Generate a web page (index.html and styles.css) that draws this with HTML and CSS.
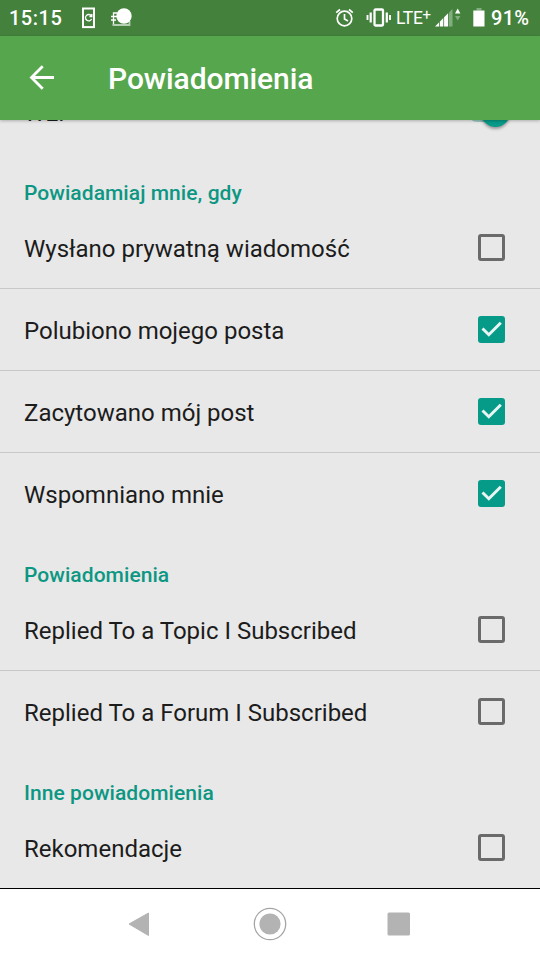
FILE: index.html
```html
<!DOCTYPE html>
<html lang="pl">
<head>
<meta charset="utf-8">
<title>Powiadomienia</title>
<link rel="stylesheet" href="styles.css">
</head>
<body>
<div class="screen">
  <header class="status">
    <span class="clock">15:15</span>
    <svg class="sim" width="14" height="22" viewBox="0 0 14 22" fill="none" stroke="#fff"><rect x="1" y="1.500" width="11" height="18.600" stroke-width="2"/><path d="M9.400 9A3.200 3.200 0 1 0 9.600 12M9.800 7v2.600H7.400" stroke-width="1.300"/></svg>
    <svg class="notice" width="24" height="20" viewBox="0 0 24 20" fill="none" stroke="#fff"><path d="M7 5H3.500v12M1 8.500h6M1 12h5" stroke-width="1.300"/><path d="M2.500 17h17v-4" stroke="#b4cfb2" stroke-width="1.800"/><circle cx="14" cy="8" r="7.700" fill="#fff" stroke="none"/></svg>
    <span class="spacer"></span>
    <svg class="alarm" width="20" height="20" viewBox="0 0 20 20" fill="none" stroke="#fff" stroke-width="1.700"><circle cx="9.500" cy="10.500" r="7.300"/><path d="M9.500 6v5l3.500 2M1.200 4.700 5 1.500M17.800 4.700 14 1.500"/></svg>
    <svg class="vibrate" width="26" height="20" viewBox="0 0 26 20" fill="none" stroke="#fff"><rect x="8.500" y="1.500" width="8.500" height="16" rx="1" stroke-width="2.300"/><path d="M4.700 4.500v10M20.800 4.500v10" stroke-width="2.200"/><path d="M1.500 7v5M24 7v5" stroke-width="1.900"/></svg>
    <span class="lte">LTE<sup>+</sup></span>
    <svg class="signal" width="27" height="20" viewBox="0 0 27 20"><path d="M14 4.500 17.500 1v17.500H14z" fill="#82ad7f"/><path d="M0 18.500 4 14.500v4zM4.800 13.700 8.300 10v8.500H4.800zM9.100 9.200l4-4v13.300h-4z" fill="#fff"/><path d="m20 5.500 2.700-5 2.700 5z" fill="#fff"/><path d="m20 8 2.700 4.500L25.400 8z" fill="#82ad7f"/></svg>
    <svg class="battery" width="12" height="20" viewBox="0 0 12 20"><path d="M3.500 0h5v2.500h-5z" fill="#82ad7f"/><path d="M.3 2.500h11.200v16H.3z" fill="#fff"/></svg>
    <span class="percent">91%</span>
  </header>
  <header class="appbar">
    <svg class="back" width="26" height="26" viewBox="0 0 26 26" fill="none" stroke="#fff" stroke-width="2.800"><path d="M25 12.500H3M13.700 1.300 2.500 12.500l11.200 11.200"/></svg>
    <h1>Powiadomienia</h1>
  </header>
  <main class="list">
    <div class="row last"><span>WŁ.</span><i class="switch"></i></div>
    <h2>Powiadamiaj mnie, gdy</h2>
    <div class="row"><span>Wysłano prywatną wiadomość</span><i class="box"></i></div>
    <div class="row"><span>Polubiono mojego posta</span><i class="box checked"><svg width="27" height="27" viewBox="0 0 27 27"><path d="m4.500 12.500 6.300 6.200L22.800 6.700"/></svg></i></div>
    <div class="row"><span>Zacytowano mój post</span><i class="box checked"><svg width="27" height="27" viewBox="0 0 27 27"><path d="m4.500 12.500 6.300 6.200L22.800 6.700"/></svg></i></div>
    <div class="row last"><span>Wspomniano mnie</span><i class="box checked"><svg width="27" height="27" viewBox="0 0 27 27"><path d="m4.500 12.500 6.300 6.200L22.800 6.700"/></svg></i></div>
    <h2>Powiadomienia</h2>
    <div class="row"><span>Replied To a Topic I Subscribed</span><i class="box"></i></div>
    <div class="row last"><span>Replied To a Forum I Subscribed</span><i class="box"></i></div>
    <h2>Inne powiadomienia</h2>
    <div class="row last"><span>Rekomendacje</span><i class="box"></i></div>
  </main>
  <nav class="navbar">
    <svg width="34" height="34" viewBox="0 0 34 34"><path d="M7 17 26.500 6v22.500z" fill="#b3b3b3" stroke="#b3b3b3" stroke-linejoin="round"/></svg>
    <svg width="34" height="34" viewBox="0 0 34 34"><circle cx="17" cy="17" r="15.700" fill="none" stroke="#a5a5a5" stroke-width="1.300"/><circle cx="17" cy="17" r="10.600" fill="#b3b3b3"/></svg>
    <svg width="34" height="34" viewBox="0 0 34 34"><rect x="5.500" y="5.500" width="22.500" height="23" rx="1.500" fill="#b3b3b3"/></svg>
  </nav>
</div>
</body>
</html>
```
FILE: styles.css
```css
* { box-sizing: border-box; }
body { margin: 0; font-family: Roboto, sans-serif; }
svg { display: block; flex: none; }
.screen { width: 540px; height: 960px; display: flex; flex-direction: column; overflow: hidden; background: #e8e8e8; }
.status { height: 36px; flex: none; display: flex; align-items: center; padding: 0 9px 1px; background: #44813d; color: #fff; font-size: 20px; font-weight: 500; }
.clock { width: 73px; letter-spacing: .5px; }
.sim { margin-right: 14px; }
.spacer { flex: 1; }
.alarm { margin-right: 11px; }
.vibrate { margin-right: 4px; }
.lte { width: 39px; font-size: 17.500px; font-weight: 400; line-height: 20px; letter-spacing: -.3px; white-space: nowrap; }
.lte sup { font-size: 15px; line-height: 0; vertical-align: 4px; font-weight: 400; }
.signal { margin-right: 11px; }
.battery { margin-right: 6px; }
.percent { width: 40px; white-space: nowrap; letter-spacing: .3px; }
.appbar { height: 84px; flex: none; display: flex; align-items: center; padding-left: 29px; background: #56a64d; color: #fff; box-shadow: 0 1px 3px rgba(0, 0, 0, .25); z-index: 1; }
.appbar h1 { margin: 2px 0 0 53px; font-size: 30px; font-weight: 500; line-height: 36px; letter-spacing: -.08px; }
.list { height: 768px; flex: none; display: flex; flex-direction: column; justify-content: flex-end; overflow: hidden; }
.row { height: 82px; flex: none; display: flex; align-items: center; justify-content: space-between; padding: 2px 35px 0 24px; border-bottom: 1px solid #c8c8c8; color: #1c1c1c; font-size: 24px; }
.row.last { border-bottom-color: transparent; }
.row:last-child { height: 81px; border-bottom: 0; }
h2 { height: 54px; flex: none; margin: 0; padding: 27px 24px 0; color: #0d9783; font-size: 21px; line-height: 26px; font-weight: 500; letter-spacing: .06px; }
.box { width: 27px; height: 27px; flex: none; margin-top: -2px; border: 3px solid #6a6a6a; border-radius: 3px; }
.checked { border: 0; background: #069a88; }
.checked path { fill: none; stroke: #e8f5f3; stroke-width: 3; }
.switch { width: 42px; height: 18px; margin-right: -5px; display: flex; align-items: center; justify-content: flex-end; border-radius: 9px; background: #9ac9c2; }
.switch::after { content: ""; width: 29px; height: 29px; flex: none; border-radius: 50%; background: #069a88; box-shadow: 0 2px 3px rgba(0, 0, 0, .35); }
.navbar { height: 72px; flex: none; display: flex; align-items: center; justify-content: space-between; padding: 0 124px 2px 122px; border-top: 1px solid #000; background: #fff; }
.navbar svg:nth-child(2) { margin-right: -1px; }
```
